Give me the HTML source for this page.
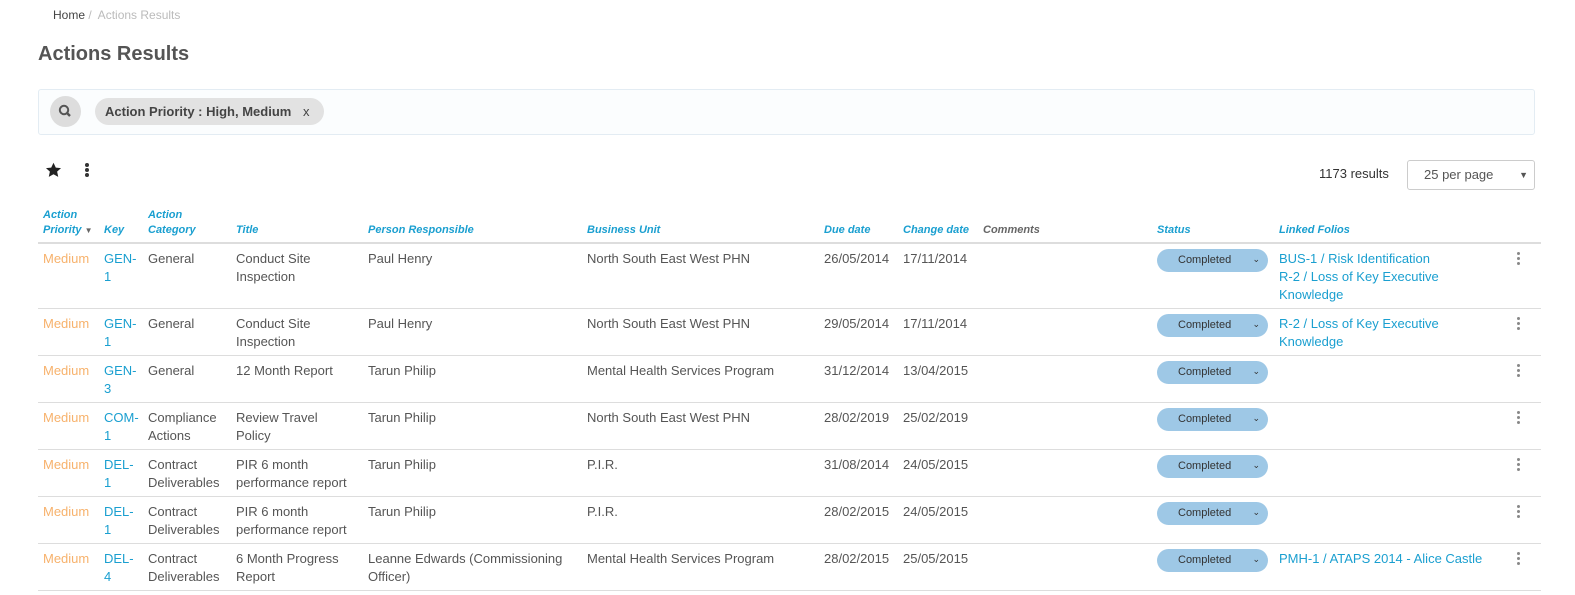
<!DOCTYPE html>
<html><head><meta charset="utf-8"><style>
body{margin:0;background:#fff;font-family:"Liberation Sans",sans-serif;color:#555;width:1575px;height:595px;overflow:hidden;position:relative}
.a{position:absolute}
table{position:absolute;left:38px;top:208px;border-collapse:collapse;table-layout:fixed;width:1503px}
th{font-size:11px;font-style:italic;font-weight:bold;color:#1a9fd0;text-align:left;vertical-align:bottom;padding:0 0 4px 5px;line-height:15px;border-bottom:2px solid #ddd;height:24px}
td{font-size:13px;line-height:18px;vertical-align:top;padding:6px 0 0 5px;border-bottom:1px solid #ddd;overflow:visible;white-space:normal}
tr.r1 td{height:58px}
tr.r td{height:40px}
.m{color:#f7b26c}.l{color:#1a9fd0}
.pill{width:111px;height:23px;background:#9ec8e6;border-radius:12px;font-size:11px;color:#333;line-height:23px;position:relative;margin-top:-1px}
.pill span{position:absolute;left:21px}
.pill i{position:absolute;right:8px;top:-1px;font-style:normal;font-size:9px}
.dots{width:3px;margin-left:8px;margin-top:2px}
.dots b{display:block;width:3px;height:3px;border-radius:50%;background:#888;margin-bottom:2px}
</style></head><body>
<div class="a" style="left:53px;top:8px;font-size:12px;color:#444">Home <span style="color:#bbb">/&nbsp; Actions Results</span></div>
<div class="a" style="left:38px;top:43px;font-size:20px;font-weight:bold;color:#555">Actions Results</div>
<div class="a" style="left:38px;top:89px;width:1495px;height:44px;border:1px solid #e3ecf3;border-radius:3px;background:#fbfdfe"></div>
<div class="a" style="left:50px;top:96px;width:31px;height:31px;border-radius:50%;background:#ddd"><svg width="31" height="31"><circle cx="14" cy="14" r="4.2" fill="none" stroke="#555" stroke-width="2"/><line x1="17" y1="17" x2="20" y2="20" stroke="#555" stroke-width="2.4"/></svg></div>
<div class="a" style="left:95px;top:98px;width:229px;height:27px;border-radius:14px;background:#e2e2e2;font-size:13px;font-weight:bold;color:#444;line-height:27px"><span style="margin-left:10px">Action Priority : High, Medium</span><span style="position:absolute;left:208px;font-weight:normal">x</span></div>
<svg class="a" style="left:45px;top:162px" width="17" height="16" viewBox="0 0 24 23"><path d="M12 1l3.3 7 7.5.8-5.6 5.1 1.6 7.5L12 17.6 5.2 21.4l1.6-7.5L1.2 8.8 8.7 8z" fill="#222"/></svg>
<div class="a" style="left:85px;top:163px"><div style="width:4px;height:4px;border-radius:50%;background:#333;margin-bottom:1px"></div><div style="width:4px;height:4px;border-radius:50%;background:#333;margin-bottom:1px"></div><div style="width:4px;height:4px;border-radius:50%;background:#333"></div></div>
<div class="a" style="left:1319px;top:166px;font-size:13px;color:#333">1173 results</div>
<div class="a" style="left:1407px;top:160px;width:126px;height:28px;border:1px solid #ccc;border-radius:3px;font-size:13px;line-height:28px;color:#555"><span style="margin-left:16px">25 per page</span><span style="position:absolute;right:6px;font-size:9px">▼</span></div>
<table>
<colgroup><col style="width:61px"><col style="width:44px"><col style="width:88px"><col style="width:132px"><col style="width:219px"><col style="width:237px"><col style="width:79px"><col style="width:80px"><col style="width:174px"><col style="width:122px"><col style="width:230px"><col style="width:37px"></colgroup>
<tr><th>Action<br>Priority <span style="color:#666;font-style:normal;font-size:8px">▼</span></th><th>Key</th><th>Action<br>Category</th><th>Title</th><th>Person Responsible</th><th>Business Unit</th><th>Due date</th><th>Change date</th><th style="color:#666">Comments</th><th>Status</th><th>Linked Folios</th><th></th></tr>
<tr class="r1"><td class="m">Medium</td><td class="l">GEN-<br>1</td><td>General</td><td>Conduct Site<br>Inspection</td><td>Paul Henry</td><td>North South East West PHN</td><td>26/05/2014</td><td>17/11/2014</td><td></td><td><div class="pill"><span>Completed</span><i>⌄</i></div></td><td class="l">BUS-1 / Risk Identification<br>R-2 / Loss of Key Executive<br>Knowledge</td><td><div class="dots"><b></b><b></b><b></b></div></td></tr>
<tr class="r"><td class="m">Medium</td><td class="l">GEN-<br>1</td><td>General</td><td>Conduct Site<br>Inspection</td><td>Paul Henry</td><td>North South East West PHN</td><td>29/05/2014</td><td>17/11/2014</td><td></td><td><div class="pill"><span>Completed</span><i>⌄</i></div></td><td class="l">R-2 / Loss of Key Executive<br>Knowledge</td><td><div class="dots"><b></b><b></b><b></b></div></td></tr>
<tr class="r"><td class="m">Medium</td><td class="l">GEN-<br>3</td><td>General</td><td>12 Month Report</td><td>Tarun Philip</td><td>Mental Health Services Program</td><td>31/12/2014</td><td>13/04/2015</td><td></td><td><div class="pill"><span>Completed</span><i>⌄</i></div></td><td></td><td><div class="dots"><b></b><b></b><b></b></div></td></tr>
<tr class="r"><td class="m">Medium</td><td class="l">COM-<br>1</td><td>Compliance<br>Actions</td><td>Review Travel<br>Policy</td><td>Tarun Philip</td><td>North South East West PHN</td><td>28/02/2019</td><td>25/02/2019</td><td></td><td><div class="pill"><span>Completed</span><i>⌄</i></div></td><td></td><td><div class="dots"><b></b><b></b><b></b></div></td></tr>
<tr class="r"><td class="m">Medium</td><td class="l">DEL-<br>1</td><td>Contract<br>Deliverables</td><td>PIR 6 month<br>performance report</td><td>Tarun Philip</td><td>P.I.R.</td><td>31/08/2014</td><td>24/05/2015</td><td></td><td><div class="pill"><span>Completed</span><i>⌄</i></div></td><td></td><td><div class="dots"><b></b><b></b><b></b></div></td></tr>
<tr class="r"><td class="m">Medium</td><td class="l">DEL-<br>1</td><td>Contract<br>Deliverables</td><td>PIR 6 month<br>performance report</td><td>Tarun Philip</td><td>P.I.R.</td><td>28/02/2015</td><td>24/05/2015</td><td></td><td><div class="pill"><span>Completed</span><i>⌄</i></div></td><td></td><td><div class="dots"><b></b><b></b><b></b></div></td></tr>
<tr class="r"><td class="m">Medium</td><td class="l">DEL-<br>4</td><td>Contract<br>Deliverables</td><td>6 Month Progress<br>Report</td><td>Leanne Edwards (Commissioning<br>Officer)</td><td>Mental Health Services Program</td><td>28/02/2015</td><td>25/05/2015</td><td></td><td><div class="pill"><span>Completed</span><i>⌄</i></div></td><td class="l">PMH-1 / ATAPS 2014 - Alice Castle</td><td><div class="dots"><b></b><b></b><b></b></div></td></tr>
</table>
</body></html>
